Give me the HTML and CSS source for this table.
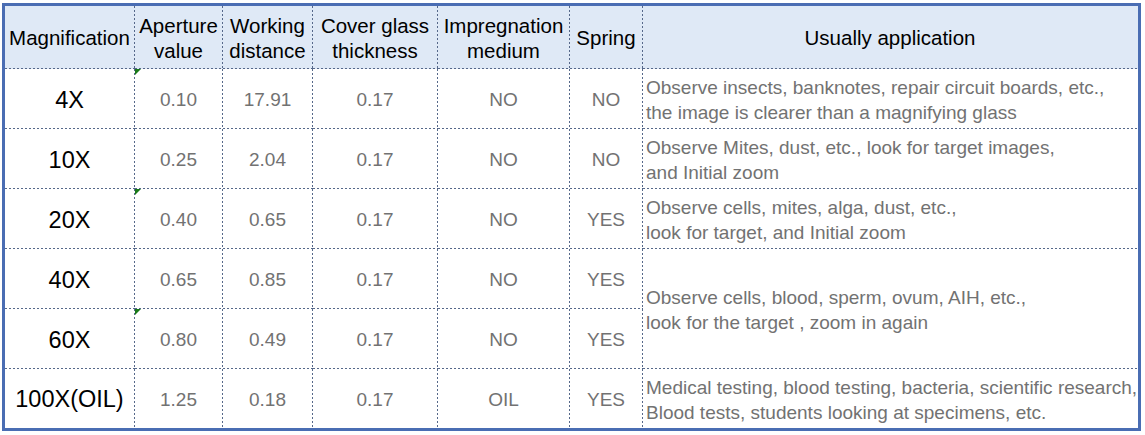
FILE: index.html
```html
<!DOCTYPE html>
<html>
<head>
<meta charset="utf-8">
<link rel="stylesheet" href="styles.css">
</head>
<body>
<div class="sheet">
  <div class="table">
    <div class="c h">Magnification</div>
    <div class="c h">Aperture<br>value</div>
    <div class="c h">Working<br>distance</div>
    <div class="c h">Cover glass<br>thickness</div>
    <div class="c h">Impregnation<br>medium</div>
    <div class="c h">Spring</div>
    <div class="c h last">Usually application</div>

    <div class="c mag">4X</div>
    <div class="c v"><span class="flag"></span>0.10</div>
    <div class="c v">17.91</div>
    <div class="c v">0.17</div>
    <div class="c v">NO</div>
    <div class="c v">NO</div>
    <div class="c app last">Observe insects, banknotes, repair circuit boards, etc.,<br>the image is clearer than a magnifying glass</div>

    <div class="c mag">10X</div>
    <div class="c v">0.25</div>
    <div class="c v">2.04</div>
    <div class="c v">0.17</div>
    <div class="c v">NO</div>
    <div class="c v">NO</div>
    <div class="c app last">Observe Mites, dust, etc., look for target images,<br>and Initial zoom</div>

    <div class="c mag">20X</div>
    <div class="c v"><span class="flag"></span>0.40</div>
    <div class="c v">0.65</div>
    <div class="c v">0.17</div>
    <div class="c v">NO</div>
    <div class="c v">YES</div>
    <div class="c app last">Observe cells, mites, alga, dust, etc.,<br>look for target, and Initial zoom</div>

    <div class="c mag">40X</div>
    <div class="c v">0.65</div>
    <div class="c v">0.85</div>
    <div class="c v">0.17</div>
    <div class="c v">NO</div>
    <div class="c v">YES</div>
    <div class="c app last span2">Observe cells, blood, sperm, ovum, AIH, etc.,<br>look for the target , zoom in again</div>

    <div class="c mag">60X</div>
    <div class="c v"><span class="flag"></span>0.80</div>
    <div class="c v">0.49</div>
    <div class="c v">0.17</div>
    <div class="c v">NO</div>
    <div class="c v">YES</div>

    <div class="c mag bottom">100X(OIL)</div>
    <div class="c v bottom">1.25</div>
    <div class="c v bottom">0.18</div>
    <div class="c v bottom">0.17</div>
    <div class="c v bottom">OIL</div>
    <div class="c v bottom">YES</div>
    <div class="c app last bottom">Medical testing, blood testing, bacteria, scientific research,<br>Blood tests, students looking at specimens, etc.</div>
  </div>
</div>
</body>
</html>
```

FILE: styles.css
```css
html, body {
  margin: 0;
  padding: 0;
  background: #ffffff;
}

.sheet {
  padding: 3px 0 0 2px;
  width: 1145px;
  height: 435px;
  box-sizing: border-box;
}

.table {
  width: 1139px;
  box-sizing: border-box;
  border: 3px solid #4a6db3;
  display: grid;
  grid-template-columns: 130px 88px 90px 125px 132px 73px 495px;
  grid-template-rows: 63px 60px 60px 60px 60px 60px 59px;
  font-family: "Liberation Sans", Arial, sans-serif;
}

.c {
  position: relative;
  display: flex;
  align-items: center;
  justify-content: center;
  text-align: center;
  box-sizing: border-box;
  padding-right: 1px;
  padding-top: 2px;
  background-color: #ffffff;
  background-image:
    repeating-linear-gradient(to right, #56688a 0 2px, transparent 2px 4px),
    repeating-linear-gradient(to bottom, #56688a 0 2px, transparent 2px 4px);
  background-size: 100% 1px, 1px 100%;
  background-position: left bottom, right top;
  background-repeat: no-repeat;
  white-space: nowrap;
}

.c.last {
  background-image:
    repeating-linear-gradient(to right, #56688a 0 2px, transparent 2px 4px);
  background-size: 100% 1px;
  background-position: left bottom;
}

.c.bottom {
  background-image:
    repeating-linear-gradient(to bottom, #56688a 0 2px, transparent 2px 4px);
  background-size: 1px 100%;
  background-position: right top;
}

.c.last.bottom {
  background-image: none;
}

.h {
  background-color: #dfe9f6;
  color: #000000;
  font-size: 20.5px;
  line-height: 25px;
  padding-top: 0;
}

.mag {
  color: #000000;
  font-size: 23.5px;
}

.v {
  color: #727272;
  font-size: 19px;
}

.app {
  justify-content: flex-start;
  text-align: left;
  color: #727272;
  font-size: 19px;
  line-height: 25px;
  padding-left: 3px;
}

.span2 {
  grid-row: span 2;
}

.flag {
  position: absolute;
  left: 0;
  top: 0;
  width: 0;
  height: 0;
  border-top: 6px solid #1a7a1a;
  border-right: 6px solid transparent;
}
```
